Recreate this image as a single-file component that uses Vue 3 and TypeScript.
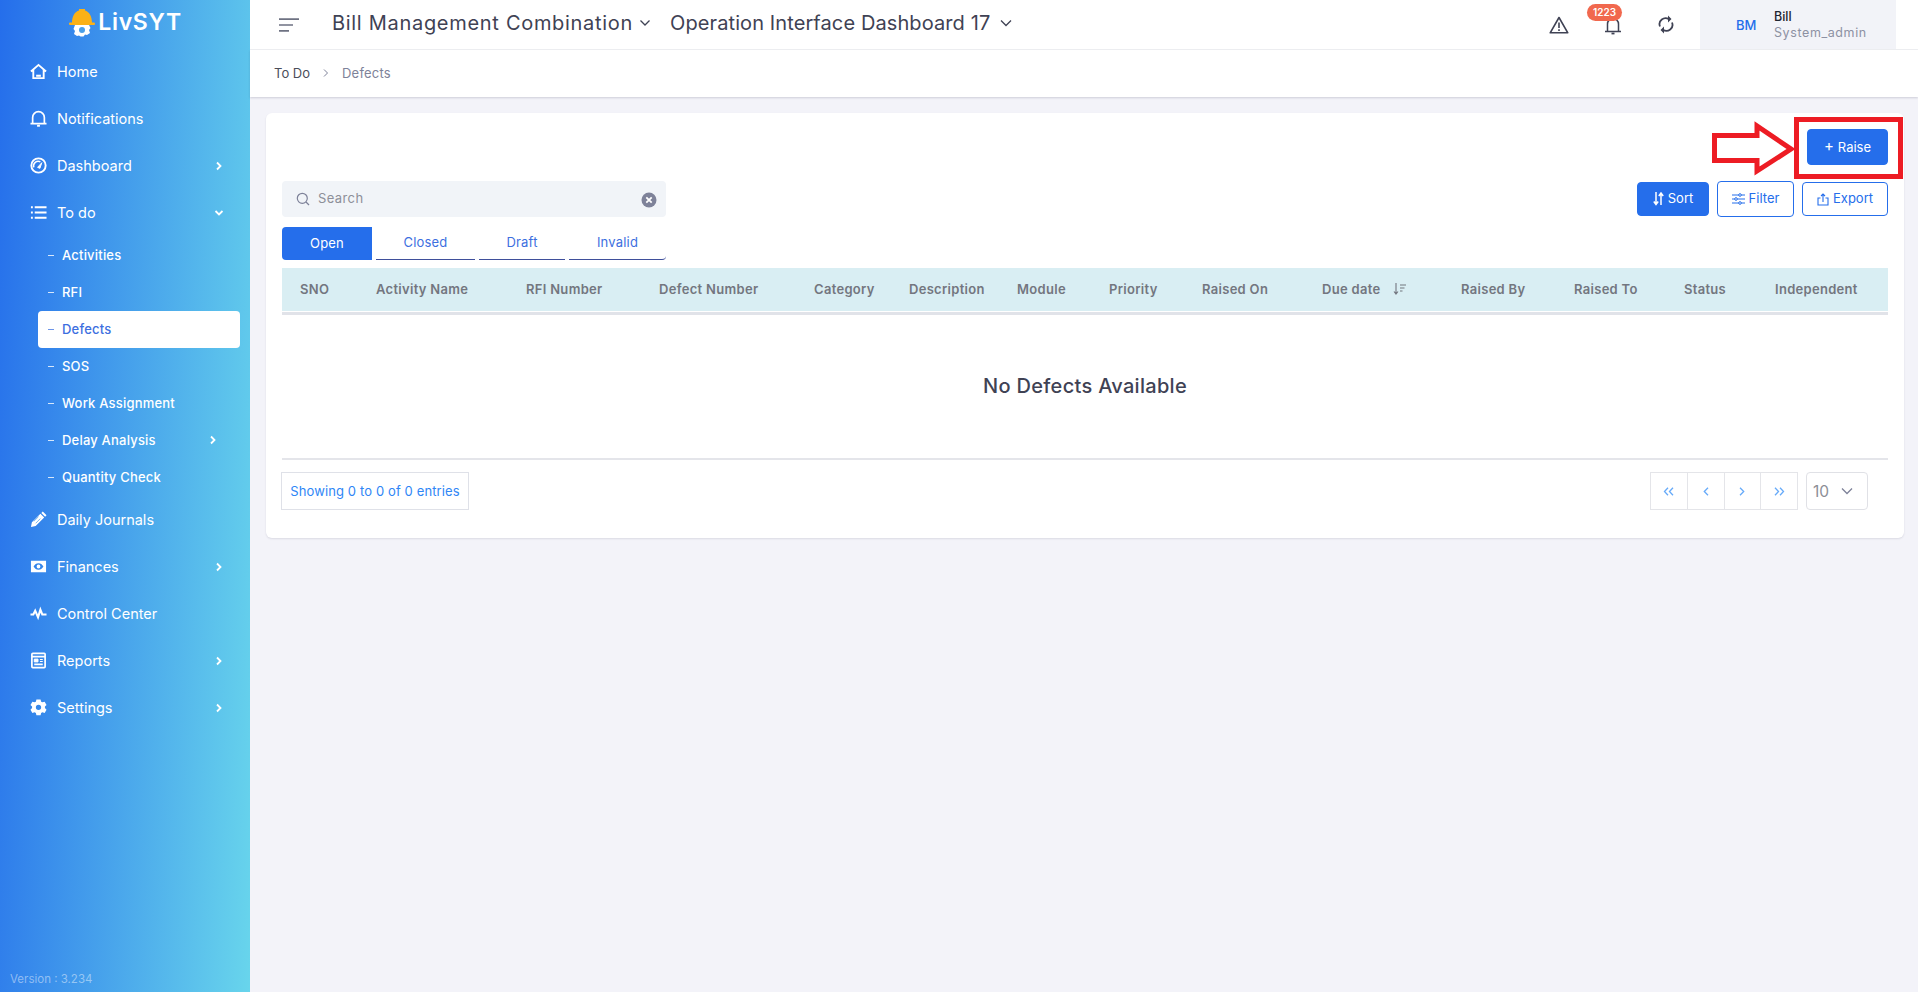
<script setup lang="ts">
const columns: string[] = ['SNO','Activity Name','RFI Number','Defect Number','Category','Description','Module','Priority','Raised On','Due date','Raised By','Raised To','Status','Independent']
const subItems = [
  { label: 'Activities' }, { label: 'RFI' }, { label: 'Defects', active: true }, { label: 'SOS' },
  { label: 'Work Assignment' }, { label: 'Delay Analysis', arrow: true }, { label: 'Quantity Check' },
]
const tabs = ['Closed', 'Draft', 'Invalid']
</script>

<template>
  <div class="page">
    <aside class="sidebar">
      <div class="logo">
        <svg class="logo-mark" width="26" height="29" viewBox="0 0 26 29">
          <path d="M6 17h14l1.500 3-1.500 2 1 3-3 2-2-.5-1.500 2h-3L10 27.500 8 28l-3-2 1-3-1.500-2z" fill="#fff"/>
          <circle cx="13" cy="22" r="3" fill="#4a9fe8"/>
          <path d="M3 15C3 8 6 3.500 10 2.500V1h6v1.500C20 3.500 23 8 23 15z" fill="#fbb116"/>
          <rect x="0" y="14.500" width="26" height="2.500" rx="1" fill="#fbb116"/>
        </svg>
        <span class="logo-text">LivSYT</span>
      </div>

      <a class="nav-item">
        <svg class="nav-icon" viewBox="0 0 18 18" fill="none" stroke="#fff" stroke-width="2"><path d="M1 9 9 2l8 7M3.500 7.500V16h11V7.500"/><path d="M6.500 13.500h5" stroke-width="2.200"/></svg>
        <span>Home</span>
      </a>
      <a class="nav-item">
        <svg class="nav-icon" viewBox="0 0 18 18" fill="none" stroke="#fff" stroke-width="1.800"><path d="M.5 14.500h17M2.800 14.500V8a6.200 6.200 0 0 1 12.400 0v6.500"/><path d="M7.500 16.700h3" stroke-width="2"/></svg>
        <span>Notifications</span>
      </a>
      <a class="nav-item">
        <svg class="nav-icon" viewBox="0 0 18 18" fill="none" stroke="#fff" stroke-width="2"><circle cx="9" cy="9" r="7.600"/><path d="M4 11a5 5 0 0 1 7-6" stroke-width="1.600"/><path d="m8 11 4.500-5-2 6z" fill="#fff" stroke-width="1"/></svg>
        <span>Dashboard</span>
        <svg class="chev" viewBox="0 0 10 10"><path d="m3 1.500 3.500 3.500L3 8.500" /></svg>
      </a>
      <a class="nav-item">
        <svg class="nav-icon" viewBox="0 0 18 18" fill="none" stroke="#fff" stroke-width="2"><path d="M5 3.500h12.500M5 9h12.500M5 14.500h12.500"/><path d="M1 3.500h2M1 9h2M1 14.500h2" stroke-width="2.200"/></svg>
        <span>To do</span>
        <svg class="chev" viewBox="0 0 10 10"><path d="M1.500 3 5 6.500 8.500 3" /></svg>
      </a>

      <div class="sub-list">
        <a v-for="s in subItems" :key="s.label" class="sub-item" :class="{ active: s.active }">
          <i class="dash"></i>
          <span>{{ s.label }}</span>
          <svg v-if="s.arrow" class="chev sub-chev" viewBox="0 0 10 10"><path d="m3 1.500 3.500 3.500L3 8.500" /></svg>
        </a>
      </div>

      <a class="nav-item">
        <svg class="nav-icon" viewBox="0 0 18 18"><path d="M1 17l1-5L11 3l4 4-9 9z M12 2l1.500-1.500 4 4L16 6z" fill="#fff"/><path d="M4 11l5-5M6 13l5-5" stroke="#4a9fe8" stroke-width=".8"/></svg>
        <span>Daily Journals</span>
      </a>
      <a class="nav-item">
        <svg class="nav-icon" viewBox="0 0 18 18"><path fill-rule="evenodd" d="M1 3h16v12H1zM9 5.500C6.500 5.500 4.500 7.500 3.800 9c.7 1.500 2.700 3.500 5.200 3.500s4.500-2 5.200-3.500C13.500 7.500 11.500 5.500 9 5.500zM9 7a2 2 0 1 1 0 4 2 2 0 0 1 0-4z" fill="#fff"/></svg>
        <span>Finances</span>
        <svg class="chev" viewBox="0 0 10 10"><path d="m3 1.500 3.500 3.500L3 8.500" /></svg>
      </a>
      <a class="nav-item">
        <svg class="nav-icon" viewBox="0 0 18 18" fill="none" stroke="#fff" stroke-width="2.200"><path d="M.5 10h3l2-4 3 7L11 5l2 5h4.500"/></svg>
        <span>Control Center</span>
      </a>
      <a class="nav-item">
        <svg class="nav-icon" viewBox="0 0 18 18" fill="none" stroke="#fff" stroke-width="1.800"><rect x="2" y="1.500" width="14" height="15" rx="1"/><path d="M2 5h14M4.500 13h9"/><path d="M4.500 7.500h4v3h-4z" fill="#fff" stroke-width="1"/><path d="M10.500 8h3M10.500 10h3" stroke-width="1.200"/></svg>
        <span>Reports</span>
        <svg class="chev" viewBox="0 0 10 10"><path d="m3 1.500 3.500 3.500L3 8.500" /></svg>
      </a>
      <a class="nav-item">
        <svg class="nav-icon" viewBox="0 0 18 18"><path fill-rule="evenodd" d="M6.800.5h4.400l.6 2.300 1.300.7 2.400-.6 2 3.400-1.700 1.700v1.600L17.500 11.300l-2 3.400-2.400-.6-1.300.7-.6 2.300H6.800l-.6-2.300-1.300-.7-2.400.6-2-3.400L2.200 9.600V8L.5 6.300l2-3.400 2.400.6 1.300-.7zM9 6a2.800 2.800 0 1 0 0 5.600A2.800 2.800 0 0 0 9 6z" fill="#fff"/></svg>
        <span>Settings</span>
        <svg class="chev" viewBox="0 0 10 10"><path d="m3 1.500 3.500 3.500L3 8.500" /></svg>
      </a>

      <div class="version">Version : 3.234</div>
    </aside>

    <div class="main">
      <header class="topbar">
        <svg class="burger" width="20" height="14" viewBox="0 0 20 14"><path d="M0 1.200h20M0 7h14M0 12.800h10" stroke="#6e7282" stroke-width="1.700"/></svg>
        <div class="project first">
          <span>Bill Management Combination</span>
          <svg width="12" height="8" viewBox="0 0 12 8" fill="none" stroke="#3f4254" stroke-width="1.300"><path d="m1.500 1.500 4.500 4.500 4.500-4.500"/></svg>
        </div>
        <div class="project second">
          <span>Operation Interface Dashboard 17</span>
          <svg width="12" height="8" viewBox="0 0 12 8" fill="none" stroke="#3f4254" stroke-width="1.300"><path d="m1 1.500 5 5 5-5"/></svg>
        </div>
        <div class="top-actions">
          <svg class="top-warn" width="20" height="18" viewBox="0 0 20 18" fill="none" stroke="#3f4254" stroke-width="1.600"><path d="M10 1.500 1.200 16.800h17.600z" stroke-linejoin="round"/><path d="M10 6.500v5.500M10 13.300v1.600"/></svg>
          <div class="bell-wrap">
            <svg width="18" height="18" viewBox="0 0 18 18" fill="none" stroke="#3f4254" stroke-width="1.500"><path d="M1 14.500h16M3.500 14.500V7a5.500 5.500 0 0 1 11 0v7.500"/><path d="M7.500 16.500h3" stroke-width="1.800"/></svg>
            <span class="badge">1223</span>
          </div>
          <svg class="top-sync" width="16" height="19" viewBox="0 0 16 19" fill="none" stroke="#3f4254" stroke-width="1.800"><path d="M2 11.500A6 6 0 0 1 11 4.300M14 7.500a6 6 0 0 1-9 7.200"/><path d="M10 .5v7l3.500-3.500zM6 18.500v-7L2.500 15z" fill="#3f4254" stroke="none"/></svg>
          <div class="user">
            <span class="avatar">BM</span>
            <div class="user-text">
              <div class="user-name">Bill</div>
              <div class="user-role">System_admin</div>
            </div>
          </div>
        </div>
      </header>

      <nav class="crumbs">
        <span class="crumb-root">To Do</span>
        <svg width="8" height="10" viewBox="0 0 8 10" fill="none" stroke="#7e8299" stroke-width="1"><path d="m2 1.500 3.500 3.500L2 8.500"/></svg>
        <span class="crumb-leaf">Defects</span>
      </nav>

      <section class="card">
        <div class="raise-row">
          <button class="btn solid raise"><span class="plus">+</span> Raise</button>
        </div>

        <div class="tools">
          <div class="left-tools">
            <div class="search">
              <svg width="14" height="14" viewBox="0 0 14 14" fill="none" stroke="#7e8299" stroke-width="1.200"><circle cx="6.300" cy="6.300" r="5"/><path d="m10 10 3 3"/></svg>
              <span class="search-ph">Search</span>
              <svg class="clear" width="16" height="16" viewBox="0 0 16 16"><circle cx="8" cy="8" r="7.500" fill="#7e8299"/><path d="m5.300 5.300 5.400 5.400m0-5.400-5.400 5.400" stroke="#fff" stroke-width="1.800"/></svg>
            </div>
            <div class="tabs">
              <span class="tab on">Open</span>
              <span v-for="t in tabs" :key="t" class="tab" :class="'t-' + t">{{ t }}</span>
            </div>
          </div>
          <div class="right-tools">
            <button class="btn solid sort">
              <svg width="11" height="14" viewBox="0 0 11 14" fill="none" stroke="#fff" stroke-width="1.500"><path d="M3 0v12M.8 9.500 3 12.500l2.200-3M8 13V1.500M5.800 4 8 1l2.200 3"/></svg>
              <span>Sort</span>
            </button>
            <button class="btn outline filter">
              <svg width="13" height="12" viewBox="0 0 13 12" fill="none" stroke="#256eeb" stroke-width="1"><path d="M0 2h13M0 6h13M0 10h13"/><circle cx="8" cy="2" r="1.300" fill="#fff"/><circle cx="4" cy="6" r="1.300" fill="#fff"/><circle cx="8" cy="10" r="1.300" fill="#fff"/></svg>
              <span>Filter</span>
            </button>
            <button class="btn outline export">
              <svg width="12" height="13" viewBox="0 0 12 13" fill="none" stroke="#256eeb" stroke-width="1.100"><path d="M3.500 5H1v7h10V5H8.500M6 9V1M4 3l2-2 2 2"/></svg>
              <span>Export</span>
            </button>
          </div>
        </div>

        <div class="thead">
          <div v-for="c in columns" :key="c" class="th" :class="{ due: c === 'Due date' }">
            {{ c }}
            <svg v-if="c === 'Due date'" class="sort-ic" width="14" height="12" viewBox="0 0 14 12" fill="none" stroke="#73767f" stroke-width="1.100"><path d="M3 0v10.500M1 8.500l2 2.500 2-2.500M7 2h6M7 5h4.500M7 8h2.500"/></svg>
          </div>
        </div>

        <div class="empty">No Defects Available</div>

        <div class="foot">
          <div class="entries">Showing 0 to 0 of 0 entries</div>
          <div class="pager">
            <div class="pages">
              <span class="pg"><svg width="11" height="9" viewBox="0 0 11 9" fill="none" stroke="#66aaf9" stroke-width="1.300"><path d="M5 .8 1.500 4.500 5 8.200M10 .8 6.500 4.500 10 8.200"/></svg></span>
              <span class="pg"><svg width="6" height="9" viewBox="0 0 6 9" fill="none" stroke="#66aaf9" stroke-width="1.300"><path d="M5 .8 1.300 4.500 5 8.200"/></svg></span>
              <span class="pg"><svg width="6" height="9" viewBox="0 0 6 9" fill="none" stroke="#66aaf9" stroke-width="1.300"><path d="m1 .8 3.700 3.700L1 8.200"/></svg></span>
              <span class="pg"><svg width="11" height="9" viewBox="0 0 11 9" fill="none" stroke="#66aaf9" stroke-width="1.300"><path d="m1 .8 3.500 3.700L1 8.200M6 .8l3.500 3.700L6 8.200"/></svg></span>
            </div>
            <div class="size">
              <span>10</span>
              <svg width="12" height="8" viewBox="0 0 12 8" fill="none" stroke="#7e8299" stroke-width="1.300"><path d="m1 1.500 5 5 5-5"/></svg>
            </div>
          </div>
        </div>

        <!-- red annotation drawn over the screenshot -->
        <div class="mark-box"></div>
        <svg class="mark-arrow" width="86" height="56" viewBox="0 0 86 56" fill="none" stroke="#ed1c24" stroke-width="5">
          <path d="M3.500 14.500h42.500V5L80 28 46 50V39.500H3.500z" stroke-linejoin="miter"/>
        </svg>
      </section>
    </div>
  </div>
</template>

<style>
html, body { margin: 0; padding: 0; background: #f3f3f9; }
</style>

<style scoped>
.page {
  display: flex;
  width: 100%;
  min-height: 992px;
  font-family: Inter, "Noto Sans", sans-serif;
}
.sidebar {
  width: 250px;
  flex: none;
  height: 992px;
  display: flex;
  flex-direction: column;
  background: linear-gradient(93deg, #256eeb 0%, #68d5ec 100%);
  color: #fff;
}
.logo {
  height: 48px;
  flex: none;
  display: flex;
  align-items: center;
  justify-content: center;
  gap: 3px;
  padding: 0 0 4px 1px;
  box-sizing: border-box;
}
.logo-text {
  font-size: 23px;
  font-weight: 600;
  letter-spacing: .7px;
}
.nav-item {
  height: 47px;
  flex: none;
  display: flex;
  align-items: center;
  padding: 0 26px 0 30px;
  font-size: 14.500px;
  box-sizing: border-box;
}
.nav-item > span { margin-left: 10px; flex: 1; }
.nav-icon { width: 17px; height: 17px; flex: none; }
.chev { width: 10px; height: 10px; flex: none; fill: none; stroke: #fff; stroke-width: 1.800; }
.sub-list { padding-top: 1px; }
.sub-item {
  height: 37px;
  display: flex;
  align-items: center;
  margin: 0 10px 0 38px;
  padding: 0 22px 1px 10px;
  font-size: 13px;
  font-weight: 500;
  letter-spacing: .2px;
  border-radius: 4px;
  box-sizing: border-box;
}
.sub-item > span { flex: 1; }
.sub-item.active { background: #fff; color: #3d6fe0; }
.dash { width: 6px; height: 1px; background: rgba(255,255,255,.8); margin-right: 8px; flex: none; }
.active .dash { background: #6d95e8; }
.sub-chev { margin-right: 0; }
.version {
  margin-top: auto;
  padding: 0 0 6px 10px;
  font-size: 11.500px;
  color: rgba(255,255,255,.45);
}

.main { flex: 1; min-width: 0; display: flex; flex-direction: column; }
.topbar {
  height: 50px;
  flex: none;
  display: flex;
  align-items: center;
  background: #fff;
  border-bottom: 1px solid #eff0f3;
  box-sizing: border-box;
  padding-left: 29px;
}
.burger { flex: none; margin-right: 33px; }
.project {
  display: flex;
  align-items: center;
  font-size: 20px;
  color: #3f4254;
  white-space: nowrap;
  margin-top: -3px;
}
.project.first { gap: 6px; letter-spacing: .7px; }
.project.second { margin-left: 19px; gap: 10px; letter-spacing: .1px; }
.top-actions {
  margin-left: auto;
  height: 49px;
  display: flex;
  align-items: center;
  margin-right: 22px;
}
.top-warn { margin-right: 35px; }
.bell-wrap { position: relative; width: 18px; height: 18px; margin-right: 36px; margin-top: 2px; }
.badge {
  position: absolute;
  left: -17px;
  top: -13px;
  width: 35px;
  height: 17px;
  border-radius: 9px;
  background: #f1684e;
  color: #fff;
  font-size: 10px;
  font-weight: 600;
  line-height: 17px;
  text-align: center;
}
.top-sync { margin-right: 26px; }
.user {
  width: 196px;
  height: 49px;
  background: #f2f3f8;
  display: flex;
  align-items: center;
  box-sizing: border-box;
  padding-left: 36px;
}
.avatar { width: 38px; color: #256eeb; font-size: 13px; font-weight: 500; }
.user-name { font-size: 12.500px; font-weight: 500; color: #1f2430; line-height: 16px; }
.user-role { font-size: 12.500px; color: #8d91a3; line-height: 16px; letter-spacing: .6px; }

.crumbs {
  height: 47px;
  flex: none;
  display: flex;
  align-items: center;
  gap: 12px;
  background: #fff;
  padding: 0 0 2px 24px;
  box-sizing: border-box;
  font-size: 13px;
  box-shadow: 0 1px 2px rgba(40,40,70,.18);
}
.crumb-root { color: #4a4d5a; }
.crumb-leaf { color: #7e8299; letter-spacing: .2px; }

.card {
  position: relative;
  margin: 16px 14px 0 16px;
  height: 425px;
  background: #fff;
  border-radius: 6px;
  box-shadow: 0 1px 2px rgba(40,40,70,.12);
  padding: 16px 16px 0;
  box-sizing: border-box;
}
.raise-row { display: flex; justify-content: flex-end; height: 36px; }
.btn {
  display: inline-flex;
  align-items: center;
  justify-content: center;
  gap: 4px;
  border-radius: 4px;
  font-family: inherit;
  font-size: 13px;
  box-sizing: border-box;
  padding: 0;
  border: 1px solid #256eeb;
}
.btn span:not(.plus) { margin-top: -2px; }
.solid { background: #256eeb; color: #fff; }
.outline { background: #fff; color: #256eeb; }
.raise { width: 81px; height: 36px; }
.plus { font-size: 15px; line-height: 12px; margin-top: -3px; }
.tools { display: flex; justify-content: space-between; margin-top: 16px; }
.search {
  width: 384px;
  height: 36px;
  background: #f1f4f8;
  border-radius: 4px;
  display: flex;
  align-items: center;
  padding: 0 9px 0 14px;
  box-sizing: border-box;
}
.search-ph { margin-left: 8px; flex: 1; color: #8d8f99; font-size: 13px; margin-top: -2px; letter-spacing: .4px; }
.clear { margin-top: 2px; }
.tabs { display: flex; gap: 4px; margin-top: 10px; }
.tab {
  height: 33px;
  display: flex;
  align-items: center;
  justify-content: center;
  font-size: 13px;
  color: #3d6fe0;
  border-bottom: 1px solid #3f4f9b;
  box-sizing: border-box;
  padding-bottom: 2px;
  letter-spacing: .2px;
}
.tab.on { width: 90px; background: #256eeb; color: #fff; border: 0; border-radius: 4px 0 0 4px; }
.t-Closed { width: 99px; }
.t-Draft { width: 86px; }
.t-Invalid { width: 97px; border-bottom-right-radius: 4px; }
.right-tools { display: flex; gap: 8px; align-items: flex-start; padding-top: 1px; }
.sort { width: 72px; height: 34px; }
.filter { width: 77px; height: 36px; margin-top: -1px; }
.export { width: 86px; height: 34px; }

.thead {
  margin-top: 8px;
  height: 47px;
  background: #d9eef3;
  border-bottom: 3px solid #e1e3e9;
  box-shadow: inset 0 -1px 0 #fff;
  box-sizing: border-box;
  display: grid;
  grid-template-columns: 94px 150px 133px 155px 95px 108px 92px 93px 120px 139px 113px 110px 91px 1fr;
  align-items: center;
  padding-bottom: 2px;
}
.th {
  font-size: 13px;
  font-weight: 600;
  letter-spacing: .3px;
  color: #73767f;
  white-space: nowrap;
  display: flex;
  align-items: center;
  box-sizing: border-box;
}
.th.due { gap: 13px; }
.th:first-child { padding-left: 18px; }
.empty {
  height: 145px;
  border-bottom: 2px solid #e4e5ea;
  box-sizing: border-box;
  display: flex;
  align-items: center;
  justify-content: center;
  font-size: 20px;
  font-weight: 500;
  letter-spacing: .3px;
  color: #3f4254;
  padding-bottom: 1px;
}
.foot {
  display: flex;
  justify-content: space-between;
  margin-top: 12px;
}
.entries {
  width: 188px;
  height: 38px;
  margin-left: -1px;
  border: 1px solid #dfe1e8;
  box-sizing: border-box;
  display: flex;
  align-items: center;
  justify-content: center;
  font-size: 13px;
  letter-spacing: .12px;
  color: #2f86f6;
}
.pager { display: flex; gap: 8px; margin-right: 20px; }
.pages { display: flex; height: 38px; width: 148px; border: 1px solid #e4e5e9; box-sizing: border-box; }
.pg { flex: 1; box-sizing: border-box; display: flex; align-items: center; justify-content: center; border-left: 1px solid #e4e5e9; }
.pg:first-child { border-left: 0; }
.size {
  width: 62px;
  height: 38px;
  border: 1px solid #e0e1e6;
  border-radius: 4px;
  box-sizing: border-box;
  display: flex;
  align-items: center;
  justify-content: space-between;
  padding: 0 14px 0 6px;
  font-size: 15.500px;
  color: #8c8e96;
}

.mark-box {
  position: absolute;
  right: 1px;
  top: 4px;
  width: 109px;
  height: 62px;
  border: 5px solid #ed1c24;
  box-sizing: border-box;
}
.mark-arrow { position: absolute; left: 1445px; top: 8px; }
</style>
